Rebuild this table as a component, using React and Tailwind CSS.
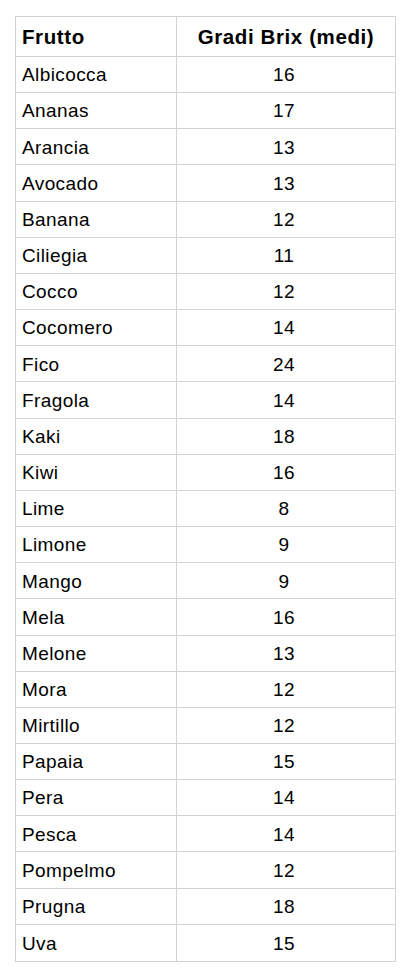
const rows = [
  ['Albicocca', 16],
  ['Ananas', 17],
  ['Arancia', 13],
  ['Avocado', 13],
  ['Banana', 12],
  ['Ciliegia', 11],
  ['Cocco', 12],
  ['Cocomero', 14],
  ['Fico', 24],
  ['Fragola', 14],
  ['Kaki', 18],
  ['Kiwi', 16],
  ['Lime', 8],
  ['Limone', 9],
  ['Mango', 9],
  ['Mela', 16],
  ['Melone', 13],
  ['Mora', 12],
  ['Mirtillo', 12],
  ['Papaia', 15],
  ['Pera', 14],
  ['Pesca', 14],
  ['Pompelmo', 12],
  ['Prugna', 18],
  ['Uva', 15],
];

export default function App() {
  return (
    <div className="min-h-[975px] w-[410px] bg-white pl-[15px] pt-[16px] font-['Liberation_Sans',Arial,sans-serif] text-black">
      <div className="w-[381px] border border-[#d2d2d2]">
        <div className="flex h-[40px] border-b border-[#d2d2d2] text-[20.5px] font-bold tracking-[0.6px]">
          <div className="flex w-[161px] items-center border-r border-[#d2d2d2] pl-[6px] pt-[1px]">Frutto</div>
          <div className="flex flex-1 items-center justify-center pt-[1px]">Gradi Brix (medi)</div>
        </div>
        {rows.map(([name, brix], i) => (
          <div
            key={name}
            className={`flex h-[36.16px] text-[19px] tracking-[0.4px] ${i < rows.length - 1 ? 'border-b border-[#d2d2d2]' : ''}`}
          >
            <div className="flex w-[161px] items-center border-r border-[#d2d2d2] pl-[6px] pt-[2px]">{name}</div>
            <div className="flex flex-1 items-center justify-center pt-[2px] pr-[4px]">{brix}</div>
          </div>
        ))}
      </div>
    </div>
  );
}
